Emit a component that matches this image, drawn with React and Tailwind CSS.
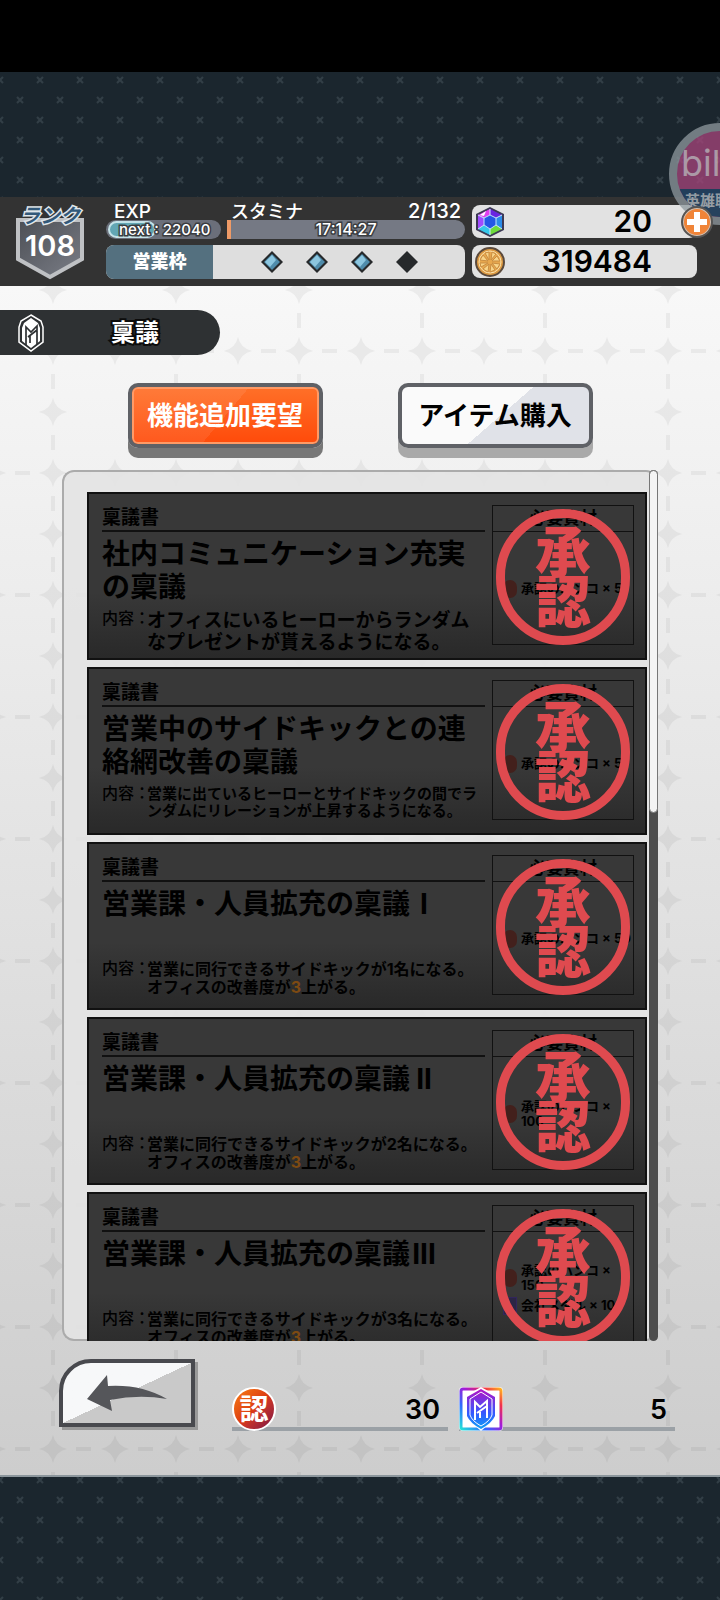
import { useState } from "react";

const RINGI = [
  {
    title: "社内コミュニケーション充実の稟議",
    body: "オフィスにいるヒーローからランダムなプレゼントが貰えるようになる。",
    size: "text-[19px] leading-[22px]",
    materials: [{ icon: "hanko", text: "承認のハンコ × 5" }],
  },
  {
    title: "営業中のサイドキックとの連絡網改善の稟議",
    body: "営業に出ているヒーローとサイドキックの間でランダムにリレーションが上昇するようになる。",
    size: "text-[15px] leading-[17px]",
    materials: [{ icon: "hanko", text: "承認のハンコ × 5" }],
  },
  {
    title: "営業課・人員拡充の稟議",
    roman: "I",
    members: 1,
    materials: [{ icon: "hanko", text: "承認のハンコ × 50" }],
  },
  {
    title: "営業課・人員拡充の稟議",
    roman: "II",
    members: 2,
    materials: [{ icon: "hanko", text: "承認のハンコ ×\n100" }],
  },
  {
    title: "営業課・人員拡充の稟議",
    roman: "III",
    members: 3,
    materials: [
      { icon: "hanko", text: "承認のハンコ ×\n150" },
      { icon: "medal", text: "会社メダル × 10" },
    ],
  },
];

const outline = "[paint-order:stroke] [-webkit-text-stroke:3px_#3a3c40]";

function CrossPattern() {
  return (
    <svg className="absolute inset-0 h-full w-full" aria-hidden="true">
      <defs>
        <pattern id="crosses" width="40" height="40" patternUnits="userSpaceOnUse">
          <g stroke="#323e46" strokeWidth="2">
            <path d="M17 17l6 6M23 17l-6 6" />
            <path d="M-3 -3l6 6M37 37l6 6M37 3l6 -6M-3 43l6 -6M37 -3l6 6M3 -3l-6 6M-3 37l6 6M43 37l-6 6" />
          </g>
        </pattern>
      </defs>
      <rect width="100%" height="100%" fill="#1b262e" />
      <rect width="100%" height="100%" fill="url(#crosses)" />
    </svg>
  );
}

function StarPattern() {
  const star = "q2.500 -11.500 14 -14q-11.500 -2.500 -14 -14q-2.500 11.500 -14 14q11.500 2.500 14 14z";
  return (
    <svg className="absolute inset-0 h-full w-full" aria-hidden="true">
      <defs>
        {/* one cell of the dashed grid, crossing at its centre */}
        <pattern id="stars" x="-8" y="4" width="123" height="122" patternUnits="userSpaceOnUse">
          <g fill="#000" fillOpacity=".05">
            <path d={`M61 75${star}`} />
            <path d={`M0 75${star}M123 75${star}`} />
            <path d={`M61 14${star}M61 136${star}`} />
            <path d="M23 59h15v4H23zM84 59h15v4H84zM59 23h4v15h-4zM59 84h4v15h-4z" />
          </g>
        </pattern>
      </defs>
      <rect width="100%" height="100%" fill="url(#stars)" />
    </svg>
  );
}

function Emblem({ className }) {
  return (
    <svg viewBox="0 0 28 38" className={className} aria-hidden="true">
      <path d="M14 1L24 7L26 13V28L14 37L2 28V13L4 7z" fill="#2e3133" stroke="#fff" strokeWidth="1.500" />
      <path d="M14 4L21 9L23 14V27L14 34L5 27V14L7 9z" fill="#fff" />
      <path d="M9 31V13L14 18L20 12V16L11 23M13 22V29M20 16V30" fill="none" stroke="#2e3133" strokeWidth="1.700" />
    </svg>
  );
}

function RankBadge() {
  return (
    <div className="relative mr-[22px] flex w-[68px] shrink-0 flex-col items-center">
      <svg viewBox="0 0 68 62" className="absolute top-[17px] left-0 w-full" aria-hidden="true">
        <defs>
          <linearGradient id="shield" x1="0" y1="0" x2="1" y2="1">
            <stop offset="0" stopColor="#4c4f55" />
            <stop offset="1" stopColor="#7b7e87" />
          </linearGradient>
        </defs>
        <path d="M2 2H66V41L34 59L2 41z" fill="url(#shield)" stroke="#bfc1c4" strokeWidth="4" />
      </svg>
      <span className="relative mt-1 text-[20px] leading-[22px] font-bold text-[#32597a] italic [paint-order:stroke] [-webkit-text-stroke:3px_#dfe5ea]">
        ランク
      </span>
      <span className="relative mt-1 text-[29px] leading-[30px] font-semibold text-white">108</span>
    </div>
  );
}

function Slot({ filled }) {
  return (
    <svg viewBox="0 0 22 22" className="h-[22px] w-[22px]" aria-hidden="true">
      <path d="M11 0L22 11L11 22L0 11z" fill="#26292b" />
      {filled && (
        <>
          <path d="M11 3L19 11L11 19L3 11z" fill="#4f8cab" />
          <path d="M11 4L15 9L9 16L4 11z" fill="#8cc6df" />
        </>
      )}
    </svg>
  );
}

function Gem() {
  return (
    <svg viewBox="0 0 30 32" className="h-8 w-[30px]" aria-hidden="true">
      <path d="M15 1L29 8V24L15 31L1 24V8z" fill="#3d3a55" />
      <path d="M15 3L3 9L9 12L15 9z" fill="#e23df0" />
      <path d="M15 3L27 9L21 12L15 9z" fill="#6a25e0" />
      <path d="M3 9L9 12V19L3 23z" fill="#a04bff" />
      <path d="M27 9L21 12V19L27 23z" fill="#2b8be8" />
      <path d="M3 23L9 19L15 23V29z" fill="#35c8ea" />
      <path d="M27 23L21 19L15 23V29z" fill="#6fdc3c" />
      <path d="M15 9L21 12V19L15 23L9 19V12z" fill="#2457e6" stroke="#bfe4ff" strokeWidth="1" />
      <path d="M15 3V9M3 9L9 12M27 9L21 12M3 23L9 19M27 23L21 19M15 29V23" stroke="#cfe6ff" strokeWidth="1" />
      <path d="M5 9L11 5L9 10z" fill="#fff" />
    </svg>
  );
}

function Coin() {
  return (
    <svg viewBox="0 0 30 30" className="h-[30px] w-[30px]" aria-hidden="true">
      <circle cx="15" cy="15" r="14" fill="#dc9a43" stroke="#5b4a3c" strokeWidth="2" />
      <circle cx="15" cy="15" r="11" fill="#e8a84e" stroke="#fbe3ae" strokeWidth="1" />
      <path
        d="M14 13L10 6L14 5zM16 13L17 5L21 7zM17 14L22 9L25 14zM17 16L25 17L22 22zM16 17L20 23L15 25zM14 17L13 25L8 22zM13 16L6 20L5 16zM13 14L5 13L8 8z"
        fill="#f8d488"
        stroke="#c98d42"
        strokeWidth="1"
      />
    </svg>
  );
}

function Header() {
  return (
    <header className="relative flex bg-[#333] pt-1 pr-[23px] pb-[7px] pl-4">
      <RankBadge />
      <div className="mr-[7px] min-w-0 flex-1 text-white">
        <div className="flex gap-[6px]">
          <div className="w-[115px]">
            <p className="pl-2 text-[19px] leading-[21px] font-medium">EXP</p>
            <div className="relative -mt-[2px] h-[19px] rounded-full bg-[#6b6f7a]">
              <div className="absolute inset-y-px left-[2px] w-12 rounded-full border-2 border-[#c4e2e8] bg-[#62a6b4]" />
              <p className={`relative pl-[13px] text-[15px] leading-[19px] font-medium whitespace-nowrap ${outline}`}>
                next : 22040
              </p>
            </div>
          </div>
          <div className="flex-1">
            <p className="flex justify-between px-1 leading-[21px] font-medium">
              <span className="text-[18px]">スタミナ</span>
              <span className="text-[20px]">2/132</span>
            </p>
            <div className="relative -mt-[2px] h-[19px] rounded-r-full bg-[#757984]">
              <div className="absolute inset-y-0 left-0 w-1 bg-[#ef9a66]" />
              <p className={`text-center text-[16px] leading-[19px] font-medium ${outline}`}>17:14:27</p>
            </div>
          </div>
        </div>
        <div className="mt-[6px] flex h-[34px] overflow-hidden rounded-lg bg-[#dedede]">
          <p className="w-[107px] bg-[#54707f] text-center text-[18px] leading-[34px] font-black">営業枠</p>
          <div className="flex flex-1 items-center justify-center gap-[23px]">
            <Slot filled />
            <Slot filled />
            <Slot filled />
            <Slot />
          </div>
        </div>
      </div>
      <div className="flex w-[225px] flex-col gap-[7px] pt-1 text-[30px] font-semibold text-black">
        <div className="relative flex h-[33px] items-center justify-between rounded-lg bg-[#e2e2e2] pr-[45px] pl-[3px]">
          <Gem />
          <span className="leading-[33px]">20</span>
          <button
            aria-label="追加"
            className="absolute top-px -right-4 z-20 flex h-8 w-8 items-center justify-center rounded-full border-2 border-[#555] bg-[#f08438] ring-1 ring-[#c9c2bc] ring-inset"
          >
            <svg viewBox="0 0 20 20" className="h-5 w-5" aria-hidden="true">
              <path d="M7 0h6v7h7v6h-7v7H7v-7H0V7h7z" fill="#fff" />
            </svg>
          </button>
        </div>
        <div className="flex h-[33px] items-center justify-between rounded-lg bg-[#e2e2e2] pr-[45px] pl-[3px]">
          <Coin />
          <span className="leading-[33px]">319484</span>
        </div>
      </div>
    </header>
  );
}

function Watermark() {
  return (
    <div className="absolute top-[123px] -right-[51px] z-10 h-[102px] w-[102px] overflow-hidden rounded-full border-[8px] border-[#8f999f] bg-[#a8457c] opacity-75">
      <p className="pt-2 pl-1 text-[36px] leading-[48px] text-[#dcc0cf]">bilibili</p>
      <p className="mt-[2px] h-8 bg-[#24476b] pl-2 text-[15px] leading-[24px] font-bold whitespace-nowrap text-[#b9c2ca]">
        英雄联盟
      </p>
    </div>
  );
}

function TabButton({ active, onClick, children }) {
  return (
    <button
      onClick={onClick}
      className={`h-[65px] w-[195px] rounded-[10px] border-4 border-[#5f6166] text-[26px] leading-[53px] font-bold ${
        active
          ? "bg-[linear-gradient(130deg,#ffffff14_50%,transparent_50%),linear-gradient(#ff7028,#ff4a0a)] text-white shadow-[0_10px_0_#777,inset_0_0_0_2px_#ff9a66]"
          : "bg-[linear-gradient(139deg,#fafafa_52%,#e0e2e8_52%)] text-black shadow-[0_10px_0_#a9a9a9]"
      }`}
    >
      {children}
    </button>
  );
}

function Stamp() {
  return (
    <div className="absolute inset-x-[3px] top-[3px] flex h-[136px] flex-col items-center justify-center rounded-full border-[9px] border-[#df4a4f] text-[56px] leading-[50px] font-black text-[#df4a4f]">
      <span>承</span>
      <span>認</span>
    </div>
  );
}

function Materials({ items }) {
  return (
    <div className="relative mt-[11px] h-[140px] w-[142px] shrink-0 border border-[#111] text-black">
      <h3 className="border-b border-[#111] text-center text-[17px] leading-[25px] font-bold">必要資材</h3>
      <ul className="flex h-[113px] flex-col justify-center gap-1 pl-[10px]">
        {items.map((item) => (
          <li key={item.text} className="flex items-center gap-1 text-[13px] leading-[15px] font-bold">
            {item.icon === "hanko" ? (
              <span className="h-[18px] w-[14px] shrink-0 rounded-full bg-[#43201c]" />
            ) : (
              <span className="h-[18px] w-[14px] shrink-0 border border-[#32265c] bg-[#2b2545]" />
            )}
            <span className="whitespace-pre">{item.text}</span>
          </li>
        ))}
      </ul>
      <Stamp />
    </div>
  );
}

function RingiCard({ item }) {
  return (
    <article className="flex h-[168px] shrink-0 gap-[7px] border-2 border-[#111] bg-linear-to-b from-[#383838] from-60% to-[#292929] pr-[11px] pl-[13px] text-black">
      <div className="min-w-0 flex-1 pt-[14px]">
        <p className="text-[19px] leading-[19px] font-bold">稟議書</p>
        <hr className="mt-[3px] border-t-2 border-[#111]" />
        <h2 className="mt-[6px] min-h-[66px] text-[28px] leading-[33px] font-bold">
          {item.title}
          {item.roman && <span className="inline-block w-7 text-center">{item.roman}</span>}
        </h2>
        <div className="mt-[6px] flex font-bold">
          <span className="w-[45px] shrink-0 text-[16px] leading-[17px] font-medium whitespace-nowrap">内容：</span>
          {item.body ? (
            <p className={`flex-1 ${item.size}`}>{item.body}</p>
          ) : (
            <p className="flex-1 text-[16px] leading-[18px] whitespace-nowrap">
              営業に同行できるサイドキックが{item.members}名になる。
              <br />
              オフィスの改善度が<span className="text-[#7d4a12]">3</span>上がる。
            </p>
          )}
        </div>
      </div>
      <Materials items={item.materials} />
    </article>
  );
}

function HankoIcon() {
  return (
    <span className="flex h-11 w-11 items-center justify-center rounded-full border-2 border-white bg-linear-to-br from-[#f77b12] via-[#dc3a12] to-[#7a1440] text-[29px] leading-none font-bold text-white">
      認
    </span>
  );
}

function MedalIcon() {
  return (
    <svg viewBox="0 0 44 44" className="h-11 w-11" aria-hidden="true">
      <defs>
        <linearGradient id="rainbow" x1="0" y1="1" x2="1" y2="0">
          <stop offset="0" stopColor="#25e0d8" />
          <stop offset=".3" stopColor="#2e6bff" />
          <stop offset=".55" stopColor="#a31bd6" />
          <stop offset=".8" stopColor="#f0324a" />
          <stop offset="1" stopColor="#ffb020" />
        </linearGradient>
        <linearGradient id="crest" x1="0" y1="0" x2="0" y2="1">
          <stop offset="0" stopColor="#b413c4" />
          <stop offset=".6" stopColor="#3558ff" />
          <stop offset="1" stopColor="#0ea0f5" />
        </linearGradient>
      </defs>
      <rect width="44" height="44" rx="4" fill="#fff" />
      <rect x="2" y="2" width="40" height="40" rx="2" fill="#fff" stroke="url(#rainbow)" strokeWidth="3" />
      <path d="M22 0L38 9V30L22 44L6 30V9z" fill="#fff" />
      <path d="M22 2L36 10V29Q33 36 22 42Q11 36 8 29V10z" fill="url(#crest)" />
      <path d="M22 5L33 12V28Q31 34 22 39Q13 34 11 28V12z" fill="none" stroke="#fff" strokeWidth="1" />
      <path d="M16 33V15L21 20L28 14V19L18 26M21 25V31M28 19V31" fill="none" stroke="#fff" strokeWidth="2" />
    </svg>
  );
}

function Balance({ icon, value }) {
  return (
    <div className="flex h-11 flex-1 items-end border-b-4 border-[#9ba1a6]">
      <span className="-mb-1">{icon}</span>
      <span className="flex-1 pr-2 text-right text-[27px] leading-[34px] font-semibold text-black">{value}</span>
    </div>
  );
}

export default function App() {
  const [tab, setTab] = useState("feature");

  return (
    <div
      lang="ja"
      className="relative min-h-screen overflow-hidden font-[Inter,'Noto_Sans_CJK_JP','Noto_Sans_CJK_SC',sans-serif]"
    >
      <CrossPattern />
      <div className="relative h-[72px] bg-black" />
      <Watermark />
      <div className="relative mt-[125px]">
        <Header />
        <main className="relative border-b-2 border-[#8c969c] bg-linear-to-b from-[#f8f8f8] to-[#cdcdcd] pt-6 pb-11">
          <StarPattern />
          <div className="relative flex h-[45px] w-[220px] items-center rounded-r-full bg-[#2e3133] pl-[17px]">
            <Emblem className="h-[38px] w-7" />
            <h1 className="ml-[66px] text-[24px] leading-[42px] font-bold text-white [paint-order:stroke] [-webkit-text-stroke:4px_#0c0c0c]">
              稟議
            </h1>
          </div>

          <div className="relative mt-7 flex justify-center gap-[75px]">
            <TabButton active={tab === "feature"} onClick={() => setTab("feature")}>
              機能追加要望
            </TabButton>
            <TabButton active={tab === "shop"} onClick={() => setTab("shop")}>
              アイテム購入
            </TabButton>
          </div>

          <section className="relative mx-[62px] mt-[22px] flex h-[871px] gap-[2px] rounded-xl border-2 border-r-0 border-[#ababab] bg-[#e3e3e3]/90">
            <div className="-mb-[2px] flex min-w-0 flex-1 flex-col gap-[7px] overflow-hidden pt-5 pl-[23px]">
              {RINGI.map((item) => (
                <RingiCard key={item.title + (item.roman || "")} item={item} />
              ))}
            </div>
            <div className="-my-[2px] w-[9px] rounded-full bg-[#4d4d4d]">
              <div className="h-[343px] rounded-full border border-[#777] bg-[#f4f4f4]" />
            </div>
          </section>

          <footer className="relative mt-[18px] flex items-start pr-[45px] pl-[59px]">
            <button
              aria-label="戻る"
              className="mr-[37px] flex h-[68px] w-[136px] items-center justify-center rounded-tl-[32px] border-4 border-[#48494e] bg-linear-to-br from-[#f7f8f9] from-50% to-[#c9c9c9] to-50% shadow-[3px_3px_0_#999]"
            >
              <svg viewBox="0 0 80 36" className="h-9 w-20" aria-hidden="true">
                <path d="M0 24L20 0L21 11Q54 9 80 24Q52 19 23 25L25 36z" fill="#55565a" />
              </svg>
            </button>
            <div className="mt-[28px] flex flex-1 gap-[11px]">
              <Balance icon={<HankoIcon />} value={30} />
              <Balance icon={<MedalIcon />} value={5} />
            </div>
          </footer>
        </main>
      </div>
    </div>
  );
}
